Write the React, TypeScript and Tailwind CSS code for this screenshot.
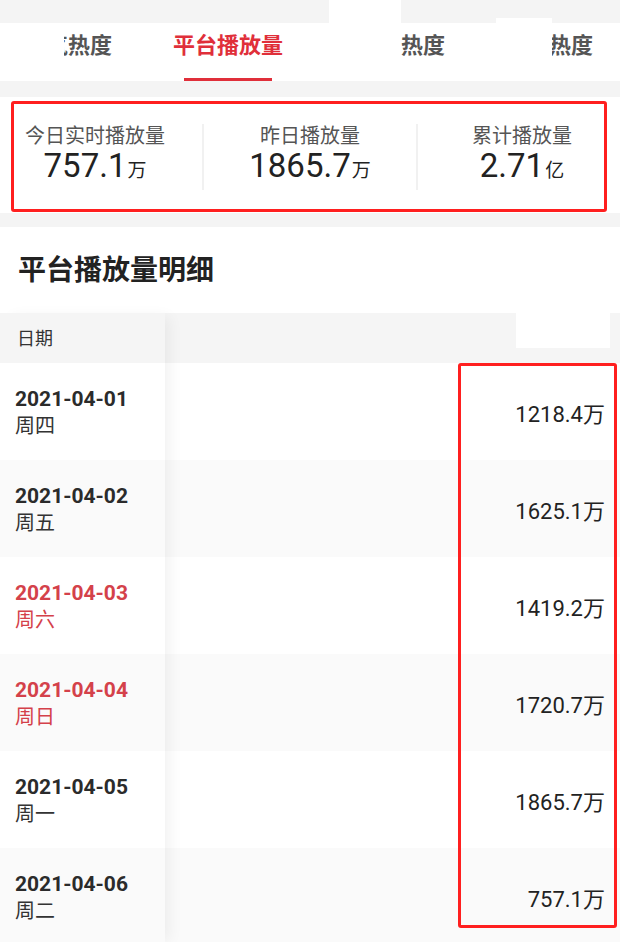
import React from "react";

const rows = [
  { date: "2021-04-01", week: "周四", value: "1218.4", red: false },
  { date: "2021-04-02", week: "周五", value: "1625.1", red: false },
  { date: "2021-04-03", week: "周六", value: "1419.2", red: true },
  { date: "2021-04-04", week: "周日", value: "1720.7", red: true },
  { date: "2021-04-05", week: "周一", value: "1865.7", red: false },
  { date: "2021-04-06", week: "周二", value: "757.1", red: false },
];

function Stat({ label, value, unit }: { label: string; value: string; unit: string }) {
  return (
    <div className="flex flex-col items-center">
      <div className="text-[20px] leading-[22px] text-[#555] whitespace-nowrap">{label}</div>
      <div className="flex items-baseline text-[#222]">
        <span className="text-[33px] leading-[38px]">{value}</span>
        <span className="text-[19px] leading-[38px] ml-[1px]">{unit}</span>
      </div>
    </div>
  );
}

export default function App() {
  return (
    <div className="w-[620px] h-[942px] overflow-hidden bg-[#f4f4f4] font-[family-name:Roboto,'Noto_Sans_CJK_SC',sans-serif]">
      {/* top gray band with white patches */}
      <div className="flex h-[23px]">
        <div className="w-[329px]" />
        <div className="w-[72px] h-full bg-white" />
        <div className="w-[95px]" />
        <div className="w-[56px] mt-[18px] h-[5px] bg-white" />
      </div>

      {/* tabs */}
      <div className="h-[58px] bg-white flex items-start pt-[8px] pl-[64px] font-bold text-[22px] leading-[30px]">
        <div className="w-[48px] overflow-hidden flex justify-end whitespace-nowrap text-[#555]">
          <span>气热度</span>
        </div>
        <div className="ml-[61px] flex flex-col items-center">
          <span className="text-[#e02f3a] whitespace-nowrap">平台播放量</span>
          <div className="mt-[17px] w-[88px] h-[3px] bg-[#e02f3a]" />
        </div>
        <div className="ml-[118px] text-[#555] whitespace-nowrap">热度</div>
        <div className="ml-[107px] w-[41px] overflow-hidden flex justify-end whitespace-nowrap text-[#555]">
          <span>热度</span>
        </div>
      </div>

      <div className="h-[16px]" />

      {/* stats */}
      <div className="bg-white pt-[4px] pl-[11px] pb-[1px]">
        <div className="w-[596px] h-[111px] border-[3px] border-[#ff1f1f] rounded-[3px] flex items-start">
          <div className="w-[188px] pr-[26px] pt-[21px] flex justify-center">
            <Stat label="今日实时播放量" value="757.1" unit="万" />
          </div>
          <div className="w-[2px] h-[66px] self-center bg-[#f1f1f1]" />
          <div className="w-[212px] pt-[21px] flex justify-center">
            <Stat label="昨日播放量" value="1865.7" unit="万" />
          </div>
          <div className="w-[2px] h-[66px] self-center bg-[#f1f1f1]" />
          <div className="w-[186px] pl-[22px] pt-[21px] flex justify-center">
            <Stat label="累计播放量" value="2.71" unit="亿" />
          </div>
        </div>
      </div>

      <div className="h-[14px]" />

      {/* title */}
      <div className="bg-white h-[86px] pt-[24px] pl-[18px]">
        <h2 className="text-[28px] leading-[40px] font-bold text-[#222]">平台播放量明细</h2>
      </div>

      {/* table */}
      <div className="relative flex bg-white">
        <div className="relative z-10 w-[165px] shrink-0 shadow-[8px_0_14px_-4px_rgba(0,0,0,0.06)]">
          <div className="h-[50px] bg-[#f5f5f5] flex items-center pl-[17px] text-[18px] text-[#333]">日期</div>
          {rows.map((r, i) => (
            <div
              key={r.date}
              className={`h-[97px] flex flex-col justify-center pl-[15px] ${i % 2 === 1 ? "bg-[#fafafa]" : "bg-white"}`}
            >
              <div className={`text-[21px] leading-[28px] font-bold ${r.red ? "text-[#d4414a]" : "text-[#2b2b2b]"}`}>
                {r.date}
              </div>
              <div className={`text-[20px] leading-[26px] ${r.red ? "text-[#d4414a]" : "text-[#333]"}`}>{r.week}</div>
            </div>
          ))}
        </div>
        <div className="flex-1">
          <div className="h-[50px] bg-[#f5f5f5] flex">
            <div className="flex-1" />
            <div className="w-[94px] h-[35px] bg-white" />
            <div className="w-[10px]" />
          </div>
          {rows.map((r, i) => (
            <div
              key={r.date}
              className={`h-[97px] flex items-center justify-end pr-[15px] pt-[7px] ${i % 2 === 1 ? "bg-[#fafafa]" : "bg-white"}`}
            >
              <span className="text-[22px] leading-[28px] text-[#222]">
                {r.value}
                <span>万</span>
              </span>
            </div>
          ))}
        </div>
        <div className="absolute left-[458px] top-[50px] w-[159px] h-[565px] border-[3px] border-[#ff1f1f] rounded-[3px] z-20 pointer-events-none" />
      </div>
    </div>
  );
}
